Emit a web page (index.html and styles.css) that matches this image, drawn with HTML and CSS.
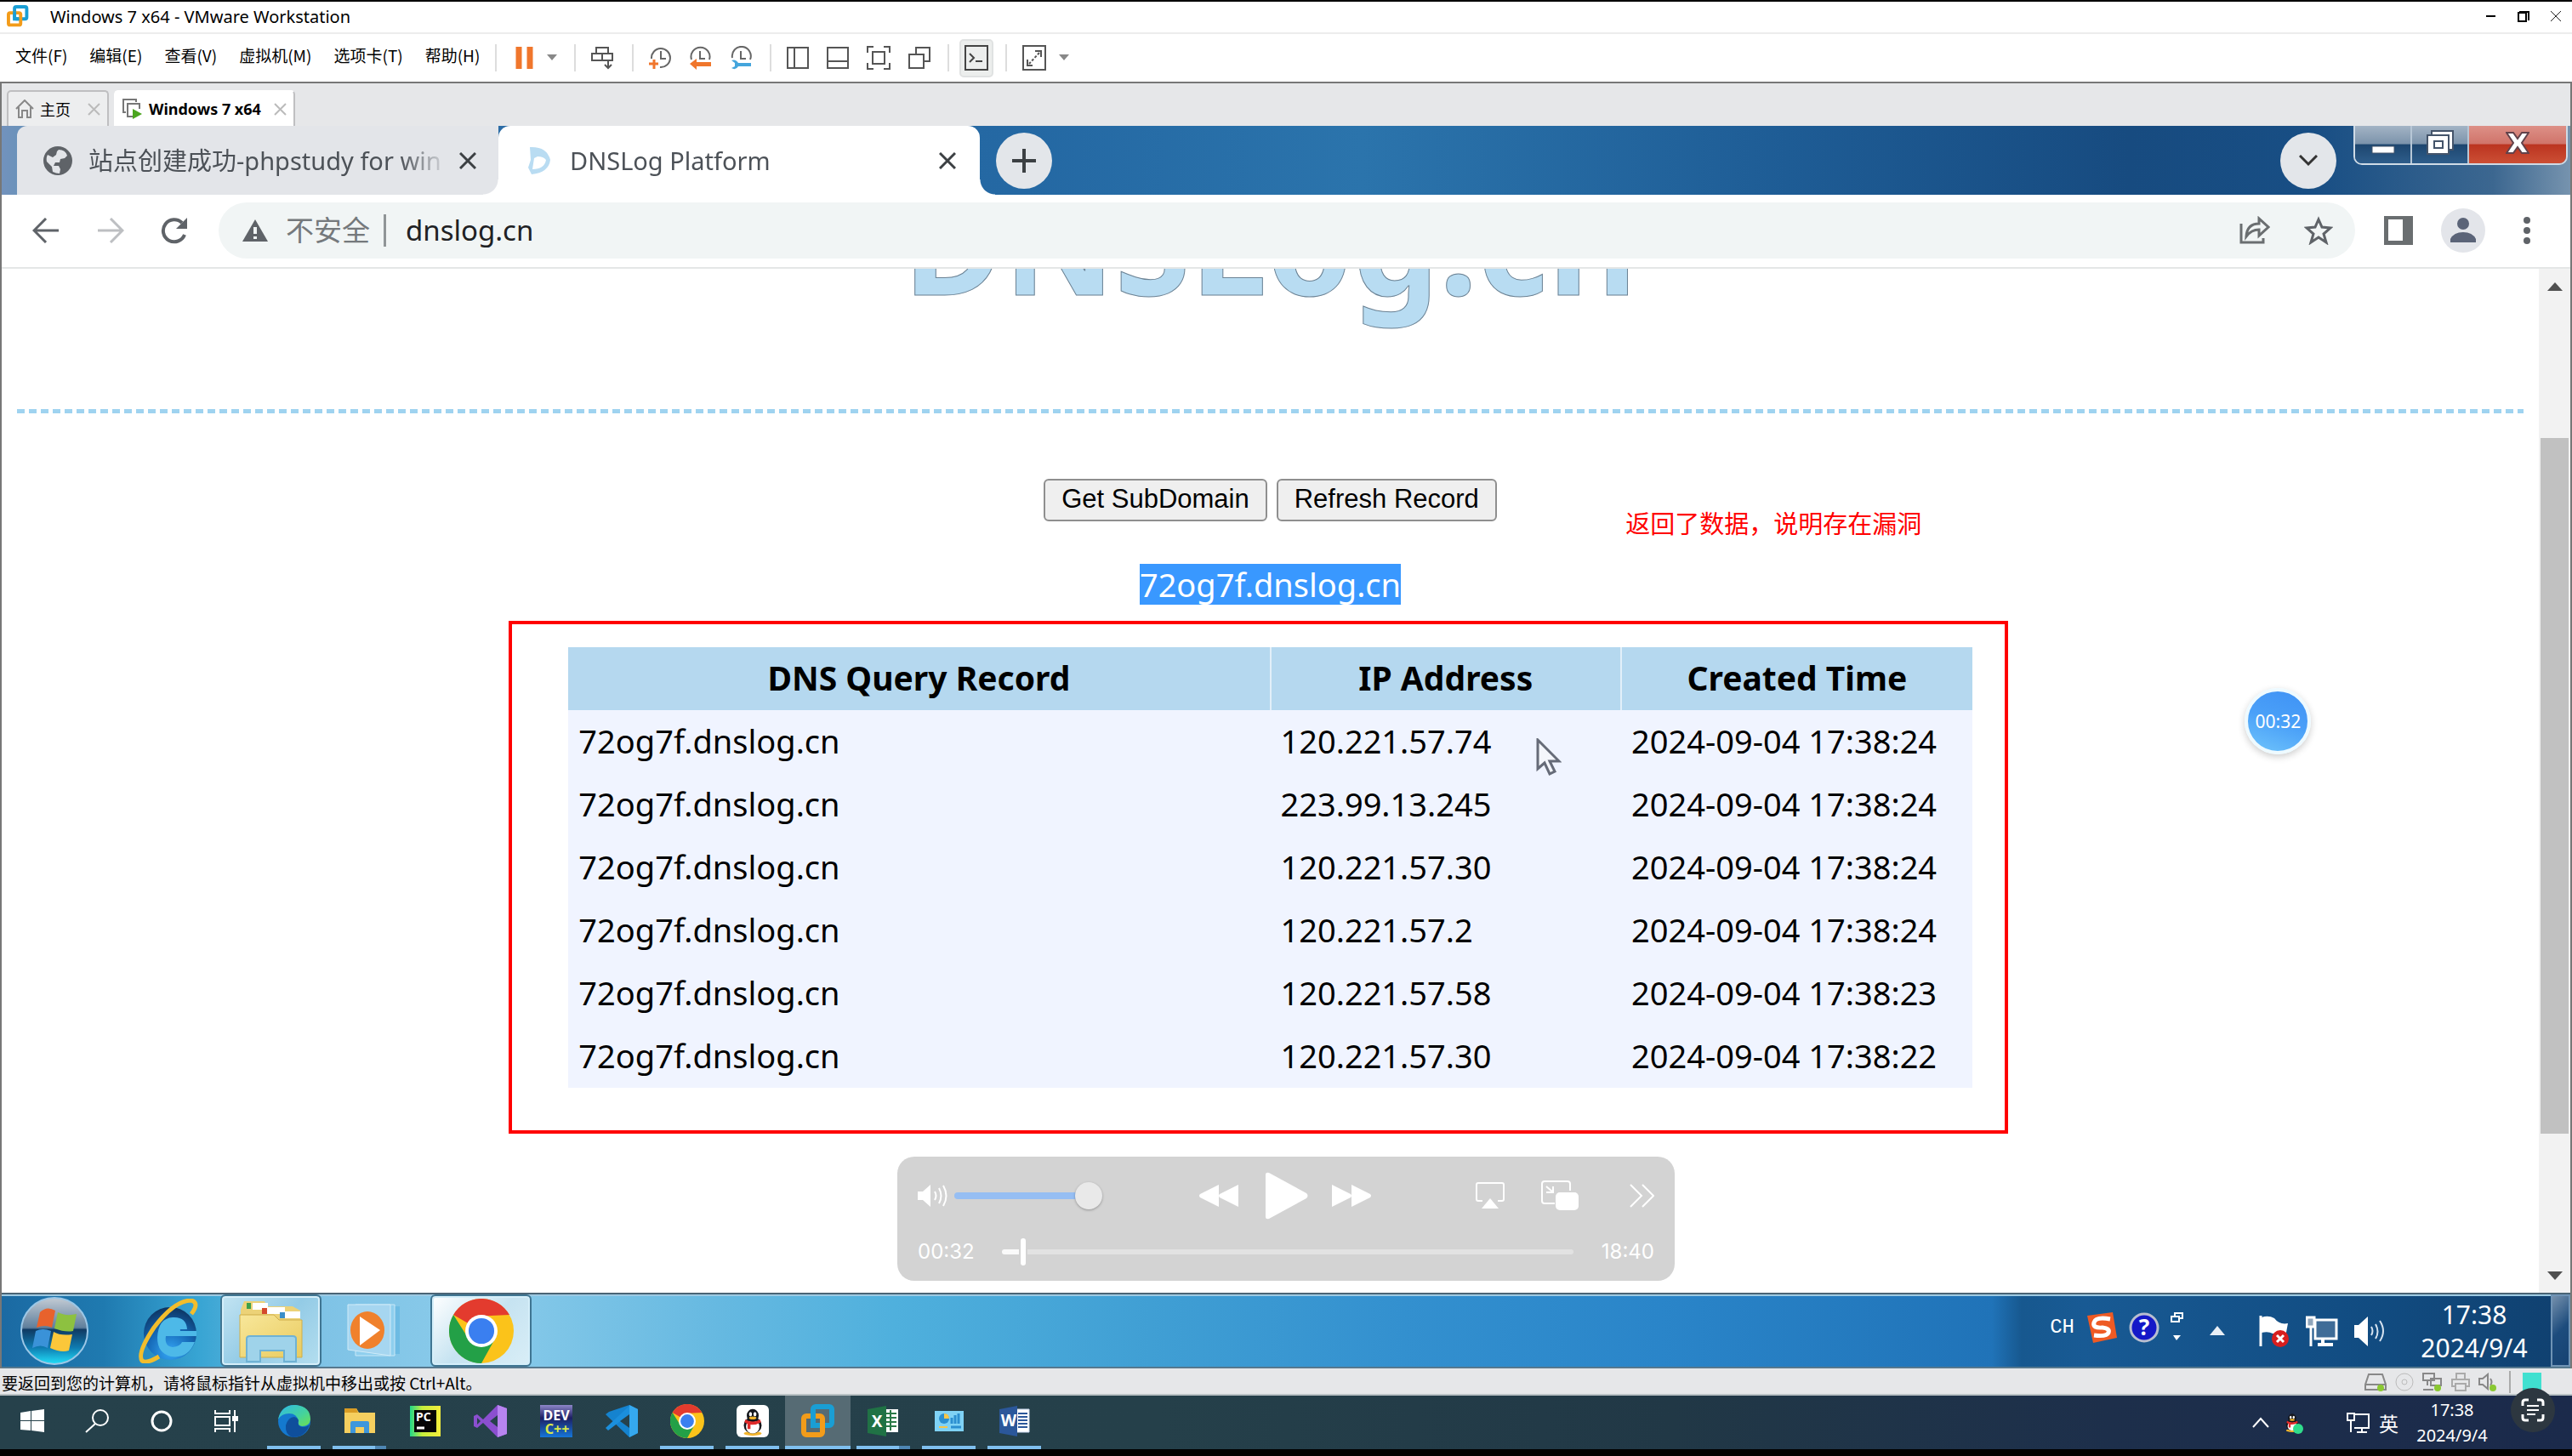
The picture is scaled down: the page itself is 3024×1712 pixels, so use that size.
FILE: index.html
```html
<!DOCTYPE html>
<html lang="zh-CN">
<head>
<meta charset="utf-8">
<title>Windows 7 x64 - VMware Workstation</title>
<link rel="stylesheet" href="styles.css">
</head>
<body>
<svg width="0" height="0" class="defs" aria-hidden="true">
  <defs>
    <linearGradient id="gOrb" x1="0" y1="0" x2="0" y2="1"><stop offset="0" stop-color="#c3cbd4"/><stop offset=".45" stop-color="#5f7f9c"/><stop offset=".48" stop-color="#0f3a63"/><stop offset=".75" stop-color="#0f7bb0"/><stop offset="1" stop-color="#22e0fa"/></linearGradient>
    <radialGradient id="gIe" cx=".5" cy=".85" r=".9"><stop offset="0" stop-color="#35a6f5"/><stop offset=".5" stop-color="#1467b5"/><stop offset="1" stop-color="#0c2d55"/></radialGradient>
    <linearGradient id="gFolder" x1="0" y1="0" x2="1" y2="1"><stop offset="0" stop-color="#f8e79a"/><stop offset="1" stop-color="#e9cb5f"/></linearGradient>
    <linearGradient id="gEdge" x1="0" y1="0" x2="1" y2="1"><stop offset="0" stop-color="#2fb8e8"/><stop offset=".6" stop-color="#45d39b"/><stop offset="1" stop-color="#6fe04f"/></linearGradient>
    <linearGradient id="gPc" x1="0" y1="0" x2="1" y2="0"><stop offset="0" stop-color="#21d789"/><stop offset=".4" stop-color="#c6ee3c"/><stop offset="1" stop-color="#f5ee3c"/></linearGradient>
    <linearGradient id="gDev" x1="0" y1="0" x2="0" y2="1"><stop offset="0" stop-color="#8d86c9"/><stop offset=".4" stop-color="#1d1f63"/><stop offset="1" stop-color="#1576d8"/></linearGradient>
    <symbol id="chrome" viewBox="0 0 48 48"><circle cx="24" cy="24" r="24" fill="#fbc31a"/><path d="M24 24 3.2 12A24 24 0 0 1 44.8 12L24 13z" fill="#e33b2e"/><path d="M3.2 12A24 24 0 0 0 24 48L34 30 24 35 14 29z" fill="#23a047"/><circle cx="24" cy="24" r="12" fill="#fff"/><circle cx="24" cy="24" r="9.500" fill="#3a7ff0"/></symbol>
    <symbol id="vm" viewBox="0 0 40 40"><rect x="14" y="3" width="22" height="22" rx="3" fill="none" stroke="#1a9ed4" stroke-width="6"/><rect x="3" y="14" width="22" height="22" rx="3" fill="none" stroke="#f39c1a" stroke-width="6"/><path d="M14 11v14h8" fill="none" stroke="#1a9ed4" stroke-width="6"/></symbol>
    <symbol id="penguin" viewBox="0 0 40 40"><ellipse cx="20" cy="36" rx="12" ry="3" fill="#f2b52c"/><ellipse cx="20" cy="25" rx="12" ry="11" fill="#15171c"/><ellipse cx="20" cy="27" rx="9" ry="9" fill="#fff"/><ellipse cx="20" cy="12" rx="8" ry="9" fill="#15171c"/><ellipse cx="17" cy="10" rx="2" ry="3" fill="#fff"/><ellipse cx="23" cy="10" rx="2" ry="3" fill="#fff"/><ellipse cx="20" cy="15" rx="5" ry="2" fill="#f2b52c"/><path d="M10 17q10 6 20 0l1 4q-7 4-14 3v6h-4v-7l-4-2z" fill="#e02a2a"/></symbol>
    <symbol id="monitor" viewBox="0 0 38 38"><path d="M11 6h25v22H11z" fill="#3f6c97" stroke="#fff" stroke-width="3"/><path d="M20 28v6M14 35h18" stroke="#fff" stroke-width="4"/><path d="M1 3h9v11H1zM6 14v23" fill="#8fa5bb" stroke="#fff" stroke-width="3"/></symbol>
  </defs>
</svg>

<header class="titlebar">
  <svg class="i26" viewBox="0 0 40 40"><use href="#vm"/></svg>
  <span>Windows 7 x64 - VMware Workstation</span>
  <div class="wincontrols">
    <button aria-label="最小化"><svg width="12" height="12"><path d="M0 6h11" stroke="#000" stroke-width="2"/></svg></button>
    <button aria-label="还原"><svg width="14" height="14"><path d="M1 3h9v10H1zM2 2h11v10" fill="none" stroke="#000" stroke-width="2"/></svg></button>
    <button aria-label="关闭"><svg width="12" height="12"><path d="M0 0l12 12M12 0L0 12" stroke="#222" stroke-width="1"/></svg></button>
  </div>
</header>

<nav class="menubar">
  <div class="menus">
    <button>文件(F)</button><button>编辑(E)</button><button>查看(V)</button><button>虚拟机(M)</button><button>选项卡(T)</button><button>帮助(H)</button>
  </div>
  <div class="tools tools-power">
    <button aria-label="暂停"><svg width="22" height="26"><path d="M4 0v26M17 0v26" stroke="#f0762c" stroke-width="7"/></svg></button>
    <button aria-label="电源选项"><svg width="12" height="8"><path d="M0 0h12L6 7z" fill="#888"/></svg></button>
  </div>
  <div class="tools">
    <button aria-label="发送 Ctrl+Alt+Del"><svg width="28" height="28" fill="none" stroke="#555" stroke-width="2"><path d="M6 9V2h14v7M1 9h12v8H1zM13 9h12v8H13zM20 17v9M16 22l4 4 4-4"/></svg></button>
  </div>
  <div class="tools tools-snap">
    <button aria-label="拍摄快照"><svg width="26" height="28" fill="none" stroke="#666" stroke-width="2"><path d="M3 15A11 11 0 1 1 13 25M14 6v9h6"/><path d="M0 21h11M6 16v11" stroke="#f0762c" stroke-width="3"/></svg></button>
    <button aria-label="恢复快照"><svg width="26" height="28" fill="none" stroke="#666" stroke-width="2"><path d="M2 16A11 11 0 1 1 23 16M12 6v9h6"/><path d="M0 21l8-6v4h17v5H8v4z" fill="#f0762c" stroke="none"/></svg></button>
    <button aria-label="管理快照"><svg width="26" height="28" fill="none" stroke="#666" stroke-width="2"><path d="M2 14A11 11 0 1 1 23 16M12 6v9h6"/><path d="M1 17q5-2 8 3h15v4H9q-3 5-8 2l4-2v-4z" fill="#44a5dc" stroke="none"/></svg></button>
  </div>
  <div class="tools">
    <button aria-label="库"><svg width="26" height="26" fill="none" stroke="#555" stroke-width="2"><path d="M1 1h24v24H1zM9 1v24"/></svg></button>
    <button aria-label="缩略图"><svg width="26" height="26" fill="none" stroke="#555" stroke-width="2"><path d="M1 1h24v24H1zM1 17h24"/></svg></button>
    <button aria-label="全屏"><svg width="28" height="28" fill="none" stroke="#555" stroke-width="2"><path d="M1 8V1h7M20 1h7v7M27 20v7h-7M8 27H1v-7M7 7h14v14H7z"/></svg></button>
    <button aria-label="Unity"><svg width="26" height="26" fill="none" stroke="#555" stroke-width="2"><path d="M9 9V1h16v16h-7M1 9h17v16H1z"/></svg></button>
  </div>
  <div class="tools tools-console">
    <button class="active" aria-label="控制台"><svg width="28" height="30" fill="none" stroke="#444" stroke-width="2"><path d="M1 1h26v28H1zM6 10l5 5-5 5M13 19h8"/></svg></button>
  </div>
  <div class="tools tools-power">
    <button aria-label="拉伸"><svg width="28" height="30" fill="none" stroke="#555" stroke-width="2"><path d="M1 1h26v28H1zM15 7h7v7M6 17v7h6"/><path d="M20 9L8 22" stroke-dasharray="3 2"/></svg></button>
    <button aria-label="拉伸选项"><svg width="12" height="8"><path d="M0 0h12L6 7z" fill="#888"/></svg></button>
  </div>
</nav>

<div class="stage">
  <nav class="vmtabs">
    <div class="vmtab">
      <svg width="22" height="22" fill="none" stroke="#888" stroke-width="2"><path d="M1 11L11 1l10 10M4 9v12h4v-8h6v8h4V9"/></svg>
      <span>主页</span>
      <button aria-label="关闭"><svg width="15" height="15"><path d="M1 1l13 13M14 1L1 14" stroke="#bbb" stroke-width="2"/></svg></button>
    </div>
    <div class="vmtab vmtab-on">
      <svg width="24" height="24" fill="none" stroke="#777" stroke-width="2"><path d="M4 16H1V1h15v3M12 21H6V6h14v6"/><path d="M12 12l11 6-11 6z" fill="#4ba51f" stroke="none"/></svg>
      <span>Windows 7 x64</span>
      <button aria-label="关闭"><svg width="15" height="15"><path d="M1 1l13 13M14 1L1 14" stroke="#bbb" stroke-width="2"/></svg></button>
    </div>
  </nav>

  <div class="tabstrip">
    <div class="tab">
      <svg width="36" height="36"><circle cx="18" cy="18" r="17" fill="#5f6368"/><path d="M19 5q8 0 10 7l-3 3-5 1-1 4h-5l-2 4h6l2 4-1 5q-4 0-8-2l-1-6-6-6q-1-5 1-8l6 3 4-3 1-4z" fill="#e3e5e9"/></svg>
      <span class="tab-title">站点创建成功-phpstudy for win</span>
      <button aria-label="关闭标签页"><svg width="20" height="20"><path d="M1 1l18 18M19 1L1 19" stroke="#3c4043" stroke-width="3"/></svg></button>
    </div>
    <div class="tab tab-on">
      <svg width="28" height="34"><path d="M3 1q20-1 24 15-2 15-22 17L1 25l3-9zM8 14l-2 13q14 0 16-11-3-4-10-4z" fill="#b9dcf2" fill-rule="evenodd"/></svg>
      <span class="tab-title">DNSLog Platform</span>
      <button aria-label="关闭标签页"><svg width="20" height="20"><path d="M1 1l18 18M19 1L1 19" stroke="#3c4043" stroke-width="3"/></svg></button>
    </div>
    <button class="round" aria-label="新标签页"><svg width="28" height="28"><path d="M14 0v28M0 14h28" stroke="#3c4043" stroke-width="4"/></svg></button>
    <button class="round round-end" aria-label="搜索标签页"><svg width="22" height="14"><path d="M1 1l10 10L21 1" fill="none" stroke="#333" stroke-width="3"/></svg></button>
    <div class="aero">
      <button aria-label="最小化"><svg width="28" height="30"><path d="M1 19h26v8H1z" fill="#fff" stroke="#44546a"/></svg></button>
      <button aria-label="还原"><svg width="32" height="30"><path d="M6 1h25v22H6z" fill="#fff" stroke="#44546a" stroke-width="2"/><path d="M1 6h25v22H1zM9 13v8h10v-8z" fill="#fff" stroke="#44546a" stroke-width="2" fill-rule="evenodd"/></svg></button>
      <button class="aero-close" aria-label="关闭"><svg width="28" height="26"><path d="M1 1h8l5 7 5-7h8l-8 12 8 12h-8l-5-7-5 7H1l8-12z" fill="#fff" stroke="#63424a" stroke-width="2"/></svg></button>
    </div>
  </div>

  <div class="addressbar">
    <button aria-label="后退"><svg width="32" height="30" fill="none" stroke="#5f6368" stroke-width="3"><path d="M31 15H3M16 1L2 15l14 14"/></svg></button>
    <button aria-label="前进"><svg width="32" height="30" fill="none" stroke="#bdbfc2" stroke-width="3"><path d="M1 15h28M16 1l14 14-14 14"/></svg></button>
    <button aria-label="重新加载"><svg width="34" height="32"><path d="M29 21A13 13 0 1 1 26 7" fill="none" stroke="#5f6368" stroke-width="4"/><path d="M32 1v13H19z" fill="#5f6368"/></svg></button>
    <div class="omnibox">
      <svg width="30" height="26"><path d="M15 0l15 26H0z" fill="#5f6368"/><path d="M15 9v8M15 20v3" stroke="#f1f5f5" stroke-width="4"/></svg>
      <label for="url">不安全</label>
      <input id="url" type="text" value="dnslog.cn">
      <button aria-label="分享"><svg width="36" height="34" fill="none" stroke="#6a6e70" stroke-width="3"><path d="M2 9v22h26v-5M8 24q1-15 15-15V3l11 10-11 10v-7q-9 0-15 8z"/></svg></button>
      <button aria-label="加入书签"><svg width="34" height="34" fill="none" stroke="#5f6368" stroke-width="3"><path d="M17 4l4 9 10 1-8 7 3 10-9-6-9 6 3-10-8-7 10-1z"/></svg></button>
    </div>
    <button class="panel" aria-label="侧边栏"><svg width="34" height="34"><path d="M0 0h34v34H0zM5 4v25h17V4z" fill="#6a6e70" fill-rule="evenodd"/></svg></button>
    <button aria-label="个人资料"><svg width="52" height="52"><circle cx="26" cy="26" r="26" fill="#e3e5ea"/><circle cx="26" cy="18" r="7" fill="#5b6478"/><path d="M11 40v-4q4-8 15-8t15 8v4z" fill="#5b6478"/></svg></button>
    <button aria-label="菜单"><svg width="10" height="32" fill="#5f6368"><circle cx="5" cy="4" r="4"/><circle cx="5" cy="16" r="4"/><circle cx="5" cy="28" r="4"/></svg></button>
  </div>

  <div class="viewport">
    <main class="page">
      <div class="banner"><h1>DNSLog.cn</h1></div>
      <div class="dashes"></div>
      <div class="actions"><button>Get SubDomain</button><button>Refresh Record</button></div>
      <p class="subdomain"><mark>72og7f.dnslog.cn</mark></p>
      <div class="records">
        <table>
          <thead><tr><th class="wide">DNS Query Record</th><th>IP Address</th><th>Created Time</th></tr></thead>
          <tbody>
            <tr><td>72og7f.dnslog.cn</td><td>120.221.57.74</td><td>2024-09-04 17:38:24</td></tr>
            <tr><td>72og7f.dnslog.cn</td><td>223.99.13.245</td><td>2024-09-04 17:38:24</td></tr>
            <tr><td>72og7f.dnslog.cn</td><td>120.221.57.30</td><td>2024-09-04 17:38:24</td></tr>
            <tr><td>72og7f.dnslog.cn</td><td>120.221.57.2</td><td>2024-09-04 17:38:24</td></tr>
            <tr><td>72og7f.dnslog.cn</td><td>120.221.57.58</td><td>2024-09-04 17:38:23</td></tr>
            <tr><td>72og7f.dnslog.cn</td><td>120.221.57.30</td><td>2024-09-04 17:38:22</td></tr>
          </tbody>
        </table>
        <div class="redbox"></div>
        <span class="note">返回了数据，说明存在漏洞</span>
        <svg class="cursor" width="30" height="44"><path d="M2 2v34l8-7 6 13 6-3-6-12h11z" fill="#f4f6fb" stroke="#666b78" stroke-width="3"/></svg>
        <div class="timer">00:32</div>
      </div>
    </main>
    <div class="scrollbar">
      <svg width="18" height="10"><path d="M9 0l9 10H0z" fill="#505050"/></svg>
      <div class="thumb"></div>
      <svg width="18" height="10"><path d="M0 0h18L9 10z" fill="#505050"/></svg>
    </div>
    <section class="player" aria-label="播放控制">
      <div class="player-row">
        <svg width="36" height="28"><path d="M0 9h6l9-8v26l-9-8H0z" fill="#fff"/><path d="M20 9q3 5 0 10M25 5q5 9 0 18M30 2q7 12 0 24" fill="none" stroke="#fff" stroke-width="2"/></svg>
        <input class="volume" type="range" min="0" max="100" value="100" aria-label="音量">
        <div class="transport">
          <button aria-label="快退"><svg width="46" height="28" fill="#fff"><path d="M23 1v26L1 16q-2-2 0-4zM46 1v26L24 16q-2-2 0-4z"/></svg></button>
          <button aria-label="播放"><svg width="54" height="56" fill="#fff"><path d="M4 3q0-3 4-2l44 24q3 3 0 6L8 55q-4 1-4-2z"/></svg></button>
          <button aria-label="快进"><svg width="46" height="28" fill="#fff"><path d="M0 1v26l22-11q2-2 0-4zM23 1v26l22-11q2-2 0-4z"/></svg></button>
        </div>
        <div class="extras">
          <button aria-label="隔空播放"><svg width="34" height="32"><path d="M8 22H3q-2 0-2-2V3q0-2 2-2h28q2 0 2 2v17q0 2-2 2h-5" fill="none" stroke="#fff" stroke-width="2"/><path d="M17 19l10 12H7z" fill="#fff"/></svg></button>
          <button aria-label="画中画"><svg width="44" height="36"><path d="M16 27H4q-3 0-3-3V4q0-3 3-3h27q3 0 3 3v8" fill="none" stroke="#fff" stroke-width="2"/><path d="M6 7l7 6M14 7v7H6" fill="none" stroke="#fff" stroke-width="2"/><rect x="17" y="14" width="27" height="21" rx="5" fill="#fff"/></svg></button>
          <button aria-label="更多"><svg width="30" height="28" fill="none" stroke="#fff" stroke-width="2"><path d="M2 1l13 13L2 27M16 1l13 13-13 13"/></svg></button>
        </div>
      </div>
      <div class="player-row">
        <time>00:32</time>
        <input class="seek" type="range" min="0" max="1120" value="36" aria-label="进度">
        <time>18:40</time>
      </div>
    </section>
  </div>

  <footer class="taskbar7">
    <button aria-label="开始"><svg width="82" height="84"><circle cx="41" cy="42" r="39" fill="url(#gOrb)" stroke="#9cc7e6" stroke-width="2"/><path d="M24 20q8-8 18-2l-4 20q-8-4-18 0z" fill="#e8622c"/><path d="M45 20q9 5 22 2l-4 20q-9 2-22-3z" fill="#8dc140"/><path d="M19 42q8-4 18 0l-4 20q-8-5-18 0z" fill="#3a92d8"/><path d="M40 43q8 5 22 3l-4 19q-9 3-22-3z" fill="#fbc73a"/></svg></button>
    <button aria-label="Internet Explorer"><svg width="76" height="76"><circle cx="41" cy="41" r="31" fill="url(#gIe)"/><path d="M29 40q2-16 13-15 11 1 11 14zM72 44H36q-2 12 8 13 9-1 11-6h15q-8 20-28 17Q26 64 26 46q1-23 18-24 16-1 17 14h-9q-1-6-8-6-7 1-8 8h36z" fill="#4db9e8"/><path d="M66 18Q76 5 66 2 46 2 22 34 2 64 8 73q5 4 20-5" fill="none" stroke="#f2bd2c" stroke-width="5"/></svg></button>
    <button class="task task-open" aria-label="资源管理器"><svg width="76" height="74"><path d="M6 2h24l3 6h30l9 5v20H2V12z" fill="#ecd277"/><path d="M16 4h18v8H16zM32 9h22v8H32zM52 14h20v8H52z" fill="#fff"/><path d="M9 4h5v7H9z" fill="#3da04a"/><path d="M27 10h6v7h-6z" fill="#d44a2c"/><path d="M48 15h6v7h-6z" fill="#3a8ec9"/><path d="M1 18h40l6 6h27v44H1z" fill="url(#gFolder)" stroke="#cfae4a"/><path d="M9 73V46q0-3 4-3h50q4 0 4 3v27H53V60H25v13z" fill="#9fd3ea" stroke="#6fb2d4" stroke-width="2"/></svg></button>
    <button class="task" aria-label="媒体播放器"><svg width="64" height="66"><path d="M18 4h44v56H18z" fill="#6dbbe3"/><path d="M10 2h46v60H10z" fill="#8fcfee" stroke="#c9e8f7"/><path d="M1 2h50v60L1 55z" fill="#a6d6f0" stroke="#d0ebf8"/><ellipse cx="24" cy="32" rx="20" ry="22" fill="#f0812c"/><path d="M15 16l24 16-24 18z" fill="#fff"/></svg></button>
    <button class="task task-focus" aria-label="Chrome"><svg width="76" height="76"><use href="#chrome"/></svg></button>
    <div class="tray7">
      <div class="langbar">
        <span class="lang">CH</span>
        <svg width="38" height="38"><path d="M2 5l30-4 5 30-28 6z" fill="#ee5a24"/><path d="M29 9Q12 6 10 13t10 6q9 1 7 6t-17 3" fill="none" stroke="#fff" stroke-width="5"/></svg>
        <svg width="36" height="36"><circle cx="18" cy="18" r="16" fill="#1418c8" stroke="#b8bed0" stroke-width="3"/><text x="18" y="27" text-anchor="middle" class="help">?</text></svg>
        <svg width="16" height="36"><path d="M5 5V1h9v6h-3M1 5h9v6H1z" fill="none" stroke="#fff" stroke-width="2"/><path d="M3 27h9l-5 6z" fill="#fff"/></svg>
      </div>
      <svg class="up7" width="18" height="11"><path d="M9 0l9 11H0z" fill="#e8eef5"/></svg>
      <svg width="38" height="38"><path d="M3 1v36" stroke="#fff" stroke-width="3"/><path d="M4 3q8-3 15 1 6 8 16 6l-3 16q-8-4-15-4-5-3-13-1z" fill="#fff"/><circle cx="26" cy="28" r="10" fill="#d81e1e"/><path d="M22 24l8 8M30 24l-8 8" stroke="#fff" stroke-width="3"/></svg>
      <svg width="38" height="38"><use href="#monitor"/></svg>
      <svg width="38" height="38"><path d="M1 12h5L17 2v35L6 27H1z" fill="#fff"/><path d="M21 14q3 5 0 10M26 11q5 9 0 17M31 7q8 12 0 24" fill="none" stroke="#d5e2ef" stroke-width="2"/></svg>
      <div class="clock7"><span>17:38</span><span>2024/9/4</span></div>
      <button class="peek" aria-label="显示桌面"></button>
    </div>
  </footer>
</div>

<div class="statusbar">
  <span>要返回到您的计算机，请将鼠标指针从虚拟机中移出或按 Ctrl+Alt。</span>
  <div class="devices">
    <svg width="26" height="22" fill="none" stroke="#888" stroke-width="2"><path d="M5 2h16l4 12v6H1v-6zM1 14h24"/><circle cx="19" cy="18" r="4" fill="#8ac832" stroke="none"/></svg>
    <svg width="22" height="22" fill="none" stroke="#bbb"><circle cx="11" cy="11" r="10"/><circle cx="11" cy="11" r="3"/></svg>
    <svg width="24" height="22" fill="none" stroke="#888" stroke-width="2"><path d="M1 1h13v8H1zM10 7h12v8H10zM6 9v6M1 20h12"/><circle cx="18" cy="18" r="4" fill="#8ac832" stroke="none"/></svg>
    <svg width="22" height="22" fill="none" stroke="#aaa" stroke-width="2"><path d="M6 7V1h10v6M5 16H1V8h20v8h-4M5 13h12v8H5z"/></svg>
    <svg width="22" height="22" fill="none" stroke="#888" stroke-width="2"><path d="M1 7h4l6-5v17l-6-5H1zM14 7q3 4 0 8"/><circle cx="17" cy="18" r="4" fill="#8ac832" stroke="none"/></svg>
    <i class="rule"></i>
    <svg width="22" height="22"><path d="M0 0h22v22H0z" fill="#40e0d0"/></svg>
  </div>
</div>

<footer class="taskbar10">
  <button class="sys" aria-label="开始"><svg width="28" height="28" fill="#fff"><path d="M0 4l12-2v11H0zM13 2l15-2v13H13zM0 14h12v11L0 24zM13 14h15v13l-15-2z"/></svg></button>
  <button class="sys" aria-label="搜索"><svg width="28" height="28" fill="none" stroke="#fff" stroke-width="2"><circle cx="18" cy="10" r="9"/><path d="M12 17L1 27"/></svg></button>
  <button class="sys" aria-label="Cortana"><svg width="26" height="26"><circle cx="13" cy="13" r="11" fill="none" stroke="#fff" stroke-width="3"/></svg></button>
  <button class="sys" aria-label="任务视图"><svg width="28" height="26" fill="none" stroke="#fff" stroke-width="2"><path d="M1 0v4h17V0M1 26v-4h17v4M1 8h17v10H1zM24 0v26"/><path d="M22 8h5v4h-5z" fill="#fff"/></svg></button>
  <button class="run" aria-label="Edge"><svg width="40" height="40"><circle cx="20" cy="20" r="19" fill="#1479cf"/><path d="M1 18Q5 0 22 1q17 2 17 17-1 8-10 8-6-1-4-6-2-9-11-9Q5 11 1 18z" fill="url(#gEdge)"/><path d="M25 19q-2 7 5 8 5 0 8-3-5 15-20 15-9-3-8-14 3-10 10-10 4 1 5 4z" fill="#0f4f9c"/></svg></button>
  <button class="run multi" aria-label="文件资源管理器"><svg width="36" height="32"><path d="M0 1h14l3 5h19v24H0z" fill="#f5cf5f"/><path d="M0 1h14l2 5H0z" fill="#d99c24"/><path d="M7 30V18q0-2 2-2h18q2 0 2 2v12h-6v-7H13v7z" fill="#3e97dc"/></svg></button>
  <button aria-label="PyCharm"><svg width="36" height="36"><path d="M0 0h36v36H0z" fill="url(#gPc)"/><path d="M5 5h26v26H5z" fill="#060606"/><text x="7" y="18" class="pc">PC</text><path d="M8 26h9" stroke="#fff" stroke-width="3"/></svg></button>
  <button aria-label="Visual Studio"><svg width="40" height="40"><path d="M28 1l11 4v30l-11 4L11 22l-7 6-4-2V14l4-2 7 6zM28 13l-9 7 9 7zM4 16v8l4-4z" fill="#8b4fd0" fill-rule="evenodd"/><path d="M28 1l11 4v30l-11 4z" fill="#b884f0"/></svg></button>
  <button aria-label="Dev-C++"><svg width="38" height="38"><path d="M0 0h38v38H0z" fill="url(#gDev)"/><text x="19" y="18" text-anchor="middle" class="dev">DEV</text><text x="20" y="34" text-anchor="middle" class="cpp">C++</text></svg></button>
  <button aria-label="VS Code"><svg width="40" height="40"><path d="M29 1l10 5v28l-10 5L4 15l-3-3 4-3z" fill="#1583cf"/><path d="M29 1l10 5v28l-10 5z" fill="#35a8ee"/><path d="M29 12L4 31l-3-3L29 2z" fill="#1b8fdc"/><path d="M29 12v16l-11-8z" fill="#26414b"/></svg></button>
  <button class="run" aria-label="Chrome"><svg width="40" height="40"><use href="#chrome"/></svg></button>
  <button class="run" aria-label="QQ"><svg width="38" height="38"><rect width="38" height="38" rx="6" fill="#fff"/><svg x="1" y="2" width="36" height="35"><use href="#penguin"/></svg></svg></button>
  <button class="run current" aria-label="VMware"><svg width="40" height="40"><use href="#vm"/></svg></button>
  <button class="run multi" aria-label="Excel"><svg width="38" height="36"><path d="M18 4h18v27H18z" fill="#fff"/><path d="M21 9h13M21 14h13M21 19h13M21 24h13M27 5v24" stroke="#2b7a48" stroke-width="2"/><path d="M0 4l22-4v36L0 32z" fill="#207245"/><text x="11" y="25" text-anchor="middle" class="office">X</text></svg></button>
  <button class="run" aria-label="控制面板"><svg width="34" height="26"><path d="M0 1h34v24H0z" fill="#7fd2f5"/><circle cx="11" cy="10" r="6" fill="#2c8fd0"/><path d="M11 10V4q6 0 6 6z" fill="#f7c64a"/><path d="M20 16V9M24 16V6M28 16V4M19 20h12" stroke="#2c8fd0" stroke-width="3"/><path d="M5 20h10" stroke="#f7c64a" stroke-width="2"/></svg></button>
  <button class="run" aria-label="Word"><svg width="36" height="36"><path d="M18 4h17v27H18z" fill="#fff" stroke="#c8d6ee"/><path d="M22 9h11M22 13h11M22 17h11M22 21h11M22 25h11" stroke="#2b579a" stroke-width="2"/><path d="M0 4l21-4v36L0 32z" fill="#2b579a"/><text x="11" y="24" text-anchor="middle" class="office">W</text></svg></button>
  <div class="tray10">
    <svg width="20" height="14"><path d="M1 12L10 2l9 10" fill="none" stroke="#fff" stroke-width="2"/></svg>
    <svg class="qq10" width="26" height="28"><svg width="24" height="27"><use href="#penguin"/></svg><circle cx="19" cy="21" r="6" fill="#30dd8c"/></svg>
    <svg width="27" height="24" fill="none" stroke="#fff" stroke-width="2"><path d="M10 2h16v16H9M18 18v4M12 23h12M1 1h8v8H1zM5 9v14"/></svg>
    <span class="ime">英</span>
    <div class="clock10"><span>17:38</span><span>2024/9/4</span></div>
    <button class="scan" aria-label="识别文本"><svg width="28" height="28" fill="none" stroke="#fff" stroke-width="3"><path d="M2 9V5q0-3 3-3h4M19 2h4q3 0 3 3v4M26 19v4q0 3-3 3h-4M9 26H5q-3 0-3-3v-4"/><path d="M7 9h14M7 14h14M7 19h10" stroke-width="2"/></svg></button>
  </div>
</footer>
</body>
</html>
```
FILE: styles.css
```css
* { box-sizing: border-box; }
html { background: #000; }
body {
  margin: 0;
  padding: 2px 0 8px;
  min-height: 100vh;
  display: flex;
  flex-direction: column;
  background: #000;
  color: #000;
  font-family: "Noto Sans", "Noto Sans CJK SC", sans-serif;
  overflow-x: hidden;
}
button {
  border: 0;
  padding: 0;
  margin: 0;
  background: none;
  font: inherit;
  color: inherit;
  display: flex;
  align-items: center;
  justify-content: center;
  flex: none;
}
svg { display: block; flex: none; }
.defs { position: absolute; }
.i26 { width: 26px; height: 26px; }

/* VMware window */
.titlebar {
  height: 38px;
  display: flex;
  align-items: center;
  gap: 25px;
  padding: 0 13px 2px 8px;
  background: #fff;
  border-bottom: 2px solid #ececec;
  font-size: 20px;
}
.wincontrols { margin-left: auto; display: flex; align-items: center; gap: 25px; }
.menubar {
  height: 56px;
  display: flex;
  align-items: center;
  padding: 0 18px;
  background: #fff;
  font-size: 19px;
}
.menus { display: flex; gap: 26px; margin-right: 18px; padding-bottom: 8px; font-family: "Noto Sans CJK SC", sans-serif; }
.tools {
  height: 32px;
  display: flex;
  align-items: center;
  gap: 21px;
  padding: 0 20px 0 18px;
  border-left: 2px solid #ddd;
}
.tools-snap { gap: 22px; }
.tools-power { gap: 15px; }
.tools-power:nth-child(2) { padding-left: 22px; }
.tools-console { padding: 0 14px 0 12px; }
.active { width: 40px; height: 45px; background: #eceeed; border: 2px solid #e0e2e2; border-radius: 5px; }
.stage {
  flex: 1;
  display: flex;
  flex-direction: column;
  border: solid #777;
  border-width: 2px 2px 0;
  background: #fff;
}
.vmtabs { height: 50px; display: flex; align-items: flex-end; gap: 6px; padding-left: 6px; background: #e6e7e9; }
.vmtab {
  height: 42px;
  display: flex;
  align-items: center;
  padding: 0 8px;
  border: 2px solid #bfbfc1;
  border-bottom: 0;
  border-radius: 5px 5px 0 0;
  background: #edeeef;
  font-size: 18px;
}
.vmtab span { margin: 0 20px 0 7px; }
.vmtab-on { background: #fff; border-color: #fff #bfbfc1 #fff #fff; font-weight: 700; }
.vmtab-on span { margin: 0 15px 0 7px; }

/* Browser chrome */
.tabstrip {
  height: 81px;
  display: flex;
  align-items: center;
  background: linear-gradient(90deg, #7292bd 0, #6b92ba 20px, #2a6ba5 600px, #2468a3 1200px, #2b74ac 1600px, #1e5c95 2100px, #174b80 2500px, #184e84 90%, #3c6790 97%, #7693ae 100%);
}
.tab {
  position: relative;
  width: 566px;
  height: 100%;
  margin-left: 18px;
  display: flex;
  align-items: center;
  padding: 0 26px 0 30px;
  background: #e3e5e9;
  border-radius: 12px 0 14px 0;
  font-size: 29px;
  color: #4c5157;
}
.tab-on { margin-left: 0; padding: 0 28px 0 34px; background: #fff; border-radius: 14px 14px 0 0; }
.tab-on::before,
.tab-on::after {
  content: "";
  position: absolute;
  bottom: 0;
  width: 18px;
  height: 18px;
}
.tab-on::before { right: 100%; background: radial-gradient(circle at 0 0, transparent 17px, #fff 18px); }
.tab-on::after { left: 100%; background: radial-gradient(circle at 100% 0, transparent 17px, #fff 18px); }
.tab-title { flex: 1; margin: 0 20px 0 18px; overflow: hidden; white-space: nowrap; line-height: 40px; mask-image: linear-gradient(90deg, #000 88%, transparent 102%); }
.tab-on .tab-title { margin-left: 22px; }
.round { width: 66px; height: 66px; margin-left: 19px; border-radius: 50%; background: #e3e6ea; }
.round-end { margin-left: auto; }
.aero {
  align-self: flex-start;
  display: flex;
  height: 46px;
  margin: 0 3px 0 20px;
  border: 2px solid #cfdbe6;
  border-top: 0;
  border-radius: 0 0 10px 10px;
  overflow: hidden;
}
.aero button {
  width: 67px;
  padding-bottom: 4px;
  border-right: 2px solid #b7c7d6;
  background: linear-gradient(#a3b4c5, #7c93ab 48%, #1d466f 50%, #2e5d8b);
}
.aero .aero-close { width: 114px; border-right: 0; background: linear-gradient(#dd9087, #d0746a 48%, #bb3420 50%, #cc4f35); }
.addressbar {
  height: 87px;
  display: flex;
  align-items: center;
  padding: 0 46px 2px 36px;
  border-bottom: 2px solid #e4e6e6;
  background: #fff;
}
.addressbar > button { margin-right: 44px; }
.addressbar > button:nth-of-type(2) { margin-right: 42px; }
.addressbar > button:nth-of-type(3) { margin-right: 35px; }
.addressbar > .panel { margin-right: 33px; }
.addressbar > button:last-child { margin-right: 0; }
.omnibox {
  flex: 1;
  height: 66px;
  display: flex;
  align-items: center;
  margin-right: 34px;
  padding: 0 26px 0 28px;
  border-radius: 33px;
  background: #f1f5f5;
  font-size: 33px;
}
.omnibox label { margin-left: 21px; padding-right: 16px; line-height: 38px; border-right: 3px solid #909597; color: #75797c; }
.omnibox input { flex: 1; min-width: 0; padding: 0 0 0 23px; border: 0; background: none; font: inherit; color: #202124; }
.omnibox button { margin-left: 40px; }

/* Page */
.viewport { position: relative; flex: 1; display: flex; }
.page { flex: 1; padding: 0 18px; }
.banner { height: 165px; padding-bottom: 71px; overflow: hidden; display: flex; justify-content: center; align-items: flex-end; }
.banner h1 {
  margin: 0;
  line-height: 250px;
  font-size: 161px;
  color: #b8dcf2;
  -webkit-text-stroke: 1px #6b8294;
}
.dashes { height: 5px; background: repeating-linear-gradient(90deg, #9fd3f0 0 9px, transparent 9px 14px); }
.actions { display: flex; justify-content: center; gap: 11px; margin-top: 77px; }
.actions button {
  height: 50px;
  padding: 0 19px 2px;
  border: 2px solid #8f8f8f;
  border-radius: 6px;
  background: #efefef;
  font: 31px "Liberation Sans", Arial, sans-serif;
}
.subdomain { margin: 50px 0; display: flex; justify-content: center; font-size: 38px; line-height: 48px; }
mark { background: #3998ff; color: #fff; }
.records { position: relative; width: 56%; margin: 0 auto; }
table { width: 100%; table-layout: fixed; border-collapse: collapse; font-size: 38px; line-height: 48px; }
th { height: 74px; padding: 0 0 2px; font-size: 39px; background: #b5d8ef; border-left: 2px solid #e2eff9; }
th:first-child { border-left: 0; }
.wide { width: 50%; }
td { height: 74px; padding: 0 12px 2px; background: #f0f4ff; white-space: nowrap; }
.redbox { position: absolute; inset: -31px -42px -54px -70px; border: 4px solid #f00; }
.note { position: absolute; top: -169px; left: 1243px; font-size: 29px; line-height: 44px; color: #f00; white-space: nowrap; font-family: "Noto Sans CJK SC", sans-serif; }
.cursor { position: absolute; top: 107px; left: 1138px; }
.timer {
  position: absolute;
  top: 48px;
  left: 1971px;
  width: 78px;
  height: 78px;
  border: 4px solid #eefaff;
  border-radius: 50%;
  background: linear-gradient(20deg, #6fc4fb, #4aa0f8 50%, #3f92f5);
  box-shadow: 0 3px 8px rgba(0, 0, 0, .2);
  color: #fff;
  font-size: 21px;
  line-height: 70px;
  text-align: center;
}
.scrollbar { width: 37px; display: flex; flex-direction: column; align-items: center; padding: 16px 0 15px; background: #f2f2f2; }
.thumb { width: 33px; height: 818px; margin: 173px 0 auto; background: #c1c1c1; }

/* Video overlay */
.player {
  position: absolute;
  bottom: 14px;
  left: 50%;
  width: 914px;
  height: 146px;
  margin-left: -457px;
  padding: 15px 24px 11px;
  border-radius: 20px;
  background: #d3d3d3;
}
.player-row { display: flex; align-items: center; justify-content: space-between; height: 62px; color: #fff; font: 24px/30px Inter, sans-serif; }
.player-row + .player-row { height: 70px; }
.transport { display: flex; align-items: center; gap: 28px; margin-left: 114px; }
.extras { display: flex; align-items: center; gap: 43px; margin-left: auto; }
.extras button:last-child { margin-left: 16px; }
input[type="range"] { appearance: none; margin: 0; background: none; }
.volume { width: 174px; height: 32px; margin-left: 9px; }
.player-row > svg { margin-right: 7px; }
.volume::-webkit-slider-runnable-track { height: 8px; border-radius: 4px; background: #96bef3; }
.volume::-webkit-slider-thumb { appearance: none; width: 32px; height: 32px; margin-top: -12px; border-radius: 50%; background: #e9e9e9; box-shadow: 0 1px 3px rgba(0, 0, 0, .3); }
.seek { width: 672px; height: 32px; }
.seek::-webkit-slider-runnable-track { height: 6px; border-radius: 3px; background: linear-gradient(90deg, #fafafa 20px, #e2e2e2 20px); }
.seek::-webkit-slider-thumb { appearance: none; width: 6px; height: 32px; margin-top: -13px; border-radius: 3px; background: #fff; box-shadow: 0 0 0 2px #d3d3d3; }

/* Windows 7 taskbar */
.taskbar7 {
  height: 89px;
  display: flex;
  align-items: center;
  padding-left: 21px;
  border-top: 2px solid #4a6475;
  border-bottom: 2px solid #56788e;
  box-shadow: inset 0 2px #9cc9e2;
  background: linear-gradient(90deg, #1b6aa3 0, #1f7ab0 120px, #37a4d3 230px, #7fc3e6 380px, #8acbea 560px, #66b9e1 840px, #4fb0dd 1050px, #409fd4 1350px, #3390cf 1650px, #2a85c9 1950px, #2073b8 2340px, #17588f 2375px, #185a94 2450px, #114b80 2800px, #10406f 100%);
}
.taskbar7 > button:nth-child(2) { margin-left: 54px; }
.task { width: 119px; height: 85px; margin-left: 2px; border: 2px solid transparent; border-radius: 6px; }
.task-open { margin-left: 24px; }
.task-open, .task-focus { border-color: #3f7592; box-shadow: inset 0 0 0 2px #d5effa; background: linear-gradient(135deg, #c3e4f2, #93cbe6 50%, #b4deef); }
.task-focus { margin-left: 7px; background: linear-gradient(135deg, #fff, #c6e3f1 50%, #d9eef7); }
.tray7 { align-self: stretch; display: flex; align-items: center; margin-left: auto; color: #fff; }
.langbar { display: flex; align-items: center; gap: 13px; padding-bottom: 8px; }
.lang { font: 24px "Liberation Mono", monospace; }
.help { font: 700 26px "Noto Sans", sans-serif; fill: #fff; }
.tray7 .up7 { margin: 0 39px 0 30px; }
.tray7 > .up7 ~ svg { margin-right: 18px; }
.clock7 { display: flex; flex-direction: column; align-items: center; width: 136px; margin: 0 22px 0 18px; font-size: 30px; line-height: 39px; }
.peek { align-self: stretch; width: 23px; border: 2px solid #6f93b5; background: linear-gradient(135deg, #7590ac, #1d4c7d 50%, #164272); }

/* Status bar */
.statusbar { height: 32px; display: flex; align-items: center; justify-content: space-between; padding: 2px 36px 0 2px; background: #e6e7e9; border-bottom: 2px solid #b9c1c4; font: 19px "Noto Sans CJK SC", sans-serif; }
.devices { display: flex; align-items: center; gap: 10px; }
.rule { width: 2px; height: 26px; margin: 0 4px; background: #aaa; }

/* Windows 10 taskbar */
.taskbar10 { height: 63px; display: flex; background: linear-gradient(90deg, #26414b 0, #25404a 45%, #213846 65%, #1d2f4b 82%, #1b2a4b 100%); }
.taskbar10 > button { width: 77px; border-bottom: 4px solid transparent; }
.taskbar10 > .sys { width: 76px; }
.taskbar10 > .sys + .run { margin-left: 3px; }
.taskbar10 > .run { background: linear-gradient(#7fbfee, #7fbfee) 50% 100% / 63px 4px no-repeat border-box; }
.taskbar10 > .multi { background: linear-gradient(90deg, #7fbfee 50px, #4e86b3 50px) 50% 100% / 63px 4px no-repeat border-box; }
.taskbar10 > .current { background: linear-gradient(#7fbfee, #7fbfee) 50% 100% / 77px 4px no-repeat border-box, #566b74; }
.pc { font: 700 14px "Noto Sans", sans-serif; fill: #fff; }
.dev { font: 700 16px "Noto Sans", sans-serif; fill: #fff; }
.cpp { font: 700 16px "Noto Sans", sans-serif; fill: #d9e84a; }
.office { font: 700 19px "Noto Sans", sans-serif; fill: #fff; }
.tray10 { display: flex; align-items: center; margin-left: auto; padding-right: 20px; color: #fff; }
.qq10 { margin: 0 50px 0 15px; }
.ime { margin-left: 11px; font-size: 23px; }
.clock10 { display: flex; flex-direction: column; align-items: center; width: 84px; margin: 0 27px 0 21px; font-size: 20px; line-height: 30px; }
.scan { position: relative; top: -15px; width: 52px; height: 52px; border-radius: 50%; background: #2d3740; }
```
